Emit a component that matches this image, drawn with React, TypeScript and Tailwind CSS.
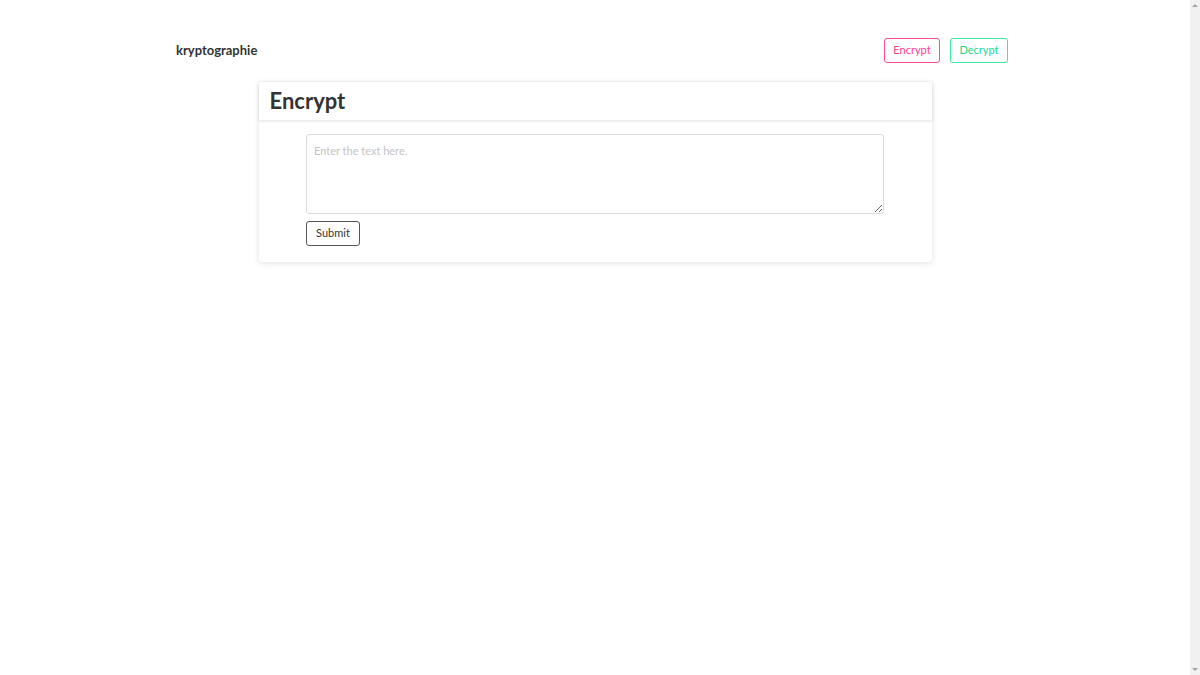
import React from "react";

export default function App() {
  return (
    <div className="flex h-[675px] w-[1200px] bg-white text-[#333]" style={{ fontFamily: 'Lato, "Open Sans", sans-serif' }}>
      <div className="flex-1 flex flex-col items-center">
        <nav className="w-[838px] pr-[6px] mt-[38px] flex items-center justify-between">
          <span className="text-[13px] font-bold text-[#333]">kryptographie</span>
          <div className="flex gap-[10px]">
            <button className="h-[25px] w-[56px] rounded-[3px] border border-[#ff4d94] text-[#ff3e8e] text-[11px] bg-white">Encrypt</button>
            <button className="h-[25px] w-[58px] rounded-[3px] border border-[#3ee6a0] text-[#22d98e] text-[11px] bg-white">Decrypt</button>
          </div>
        </nav>
        <div className="mt-[19px] w-[673px] bg-white rounded-[3px] shadow-[0_1px_6px_rgba(0,0,0,0.12)]">
          <div className="h-[38px] px-[11px] flex items-center shadow-[0_1px_3px_rgba(0,0,0,0.12)]">
            <h1 className="text-[22px] font-bold text-[#333] leading-none">Encrypt</h1>
          </div>
          <div className="flex flex-col items-start w-[578px] mx-auto pt-[14px] pb-[16px]">
            <textarea
              placeholder="Enter the text here."
              className="w-[578px] h-[80px] border border-[#dcdcdc] rounded-[3px] px-[7px] py-[8px] text-[11px] placeholder:text-[#c4c4c4] outline-none"
            />
            <button className="mt-[7px] h-[25px] w-[54px] rounded-[3px] border border-[#555] text-[11px] text-[#333] bg-white">Submit</button>
          </div>
        </div>
      </div>
      <div className="w-[10px] h-full bg-[#f1f1f1] flex flex-col justify-between items-center py-[4px]">
        <div className="w-0 h-0 border-l-[3px] border-r-[3px] border-b-[3px] border-l-transparent border-r-transparent border-b-[#a3a3a3]" />
        <div className="w-0 h-0 border-l-[3px] border-r-[3px] border-t-[3px] border-l-transparent border-r-transparent border-t-[#a3a3a3]" />
      </div>
    </div>
  );
}
